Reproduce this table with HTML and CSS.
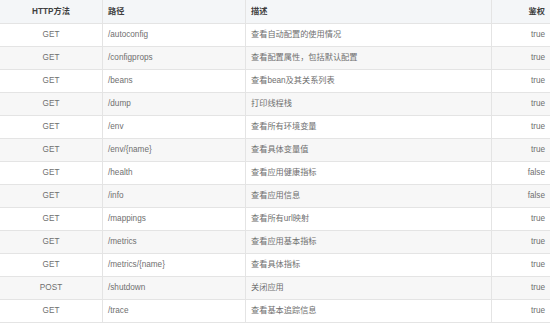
FILE: index.html
```html
<!DOCTYPE html>
<html lang="zh">
<head>
<meta charset="utf-8">
<link rel="stylesheet" href="styles.css">
</head>
<body>
<table class="api">
  <colgroup>
    <col class="c-method"><col class="c-path"><col class="c-desc"><col class="c-auth">
  </colgroup>
  <thead>
    <tr><th class="center">HTTP方法</th><th>路径</th><th>描述</th><th class="right">鉴权</th></tr>
  </thead>
  <tbody>
    <tr><td class="center">GET</td><td>/autoconfig</td><td>查看自动配置的使用情况</td><td class="right">true</td></tr>
    <tr><td class="center">GET</td><td>/configprops</td><td>查看配置属性，包括默认配置</td><td class="right">true</td></tr>
    <tr><td class="center">GET</td><td>/beans</td><td>查看bean及其关系列表</td><td class="right">true</td></tr>
    <tr><td class="center">GET</td><td>/dump</td><td>打印线程栈</td><td class="right">true</td></tr>
    <tr><td class="center">GET</td><td>/env</td><td>查看所有环境变量</td><td class="right">true</td></tr>
    <tr><td class="center">GET</td><td>/env/{name}</td><td>查看具体变量值</td><td class="right">true</td></tr>
    <tr><td class="center">GET</td><td>/health</td><td>查看应用健康指标</td><td class="right">false</td></tr>
    <tr><td class="center">GET</td><td>/info</td><td>查看应用信息</td><td class="right">false</td></tr>
    <tr><td class="center">GET</td><td>/mappings</td><td>查看所有url映射</td><td class="right">true</td></tr>
    <tr><td class="center">GET</td><td>/metrics</td><td>查看应用基本指标</td><td class="right">true</td></tr>
    <tr><td class="center">GET</td><td>/metrics/{name}</td><td>查看具体指标</td><td class="right">true</td></tr>
    <tr><td class="center">POST</td><td>/shutdown</td><td>关闭应用</td><td class="right">true</td></tr>
    <tr><td class="center">GET</td><td>/trace</td><td>查看基本追踪信息</td><td class="right">true</td></tr>
  </tbody>
</table>
</body>
</html>
```
FILE: styles.css
```css
html, body {
  margin: 0;
  padding: 0;
  background: #ffffff;
  overflow: hidden;
}
.api {
  border-collapse: collapse;
  table-layout: fixed;
  width: 552px;
  margin: -1px 0 0 -1px;
  font-family: "Liberation Sans", "Noto Sans CJK SC", sans-serif;
  font-size: 8.2px;
  color: #6f6f6f;
}
.c-method { width: 103px; }
.c-path { width: 143px; }
.c-desc { width: 246px; }
.c-auth { width: 60px; }
.api th, .api td {
  border: 1px solid #e4e4e4;
  padding: 0 5px;
  text-align: left;
  white-space: nowrap;
  line-height: 10px;
}
.api th {
  height: 23px;
  background: #f4f6f8;
  color: #3f3f3f;
  font-weight: bold;
}
.api td {
  height: 22px;
}
.api tbody tr:nth-child(even) td {
  background: #f7f7f7;
}
.api .center { text-align: center; }
.api .right { text-align: right; padding-right: 6px; }
```
